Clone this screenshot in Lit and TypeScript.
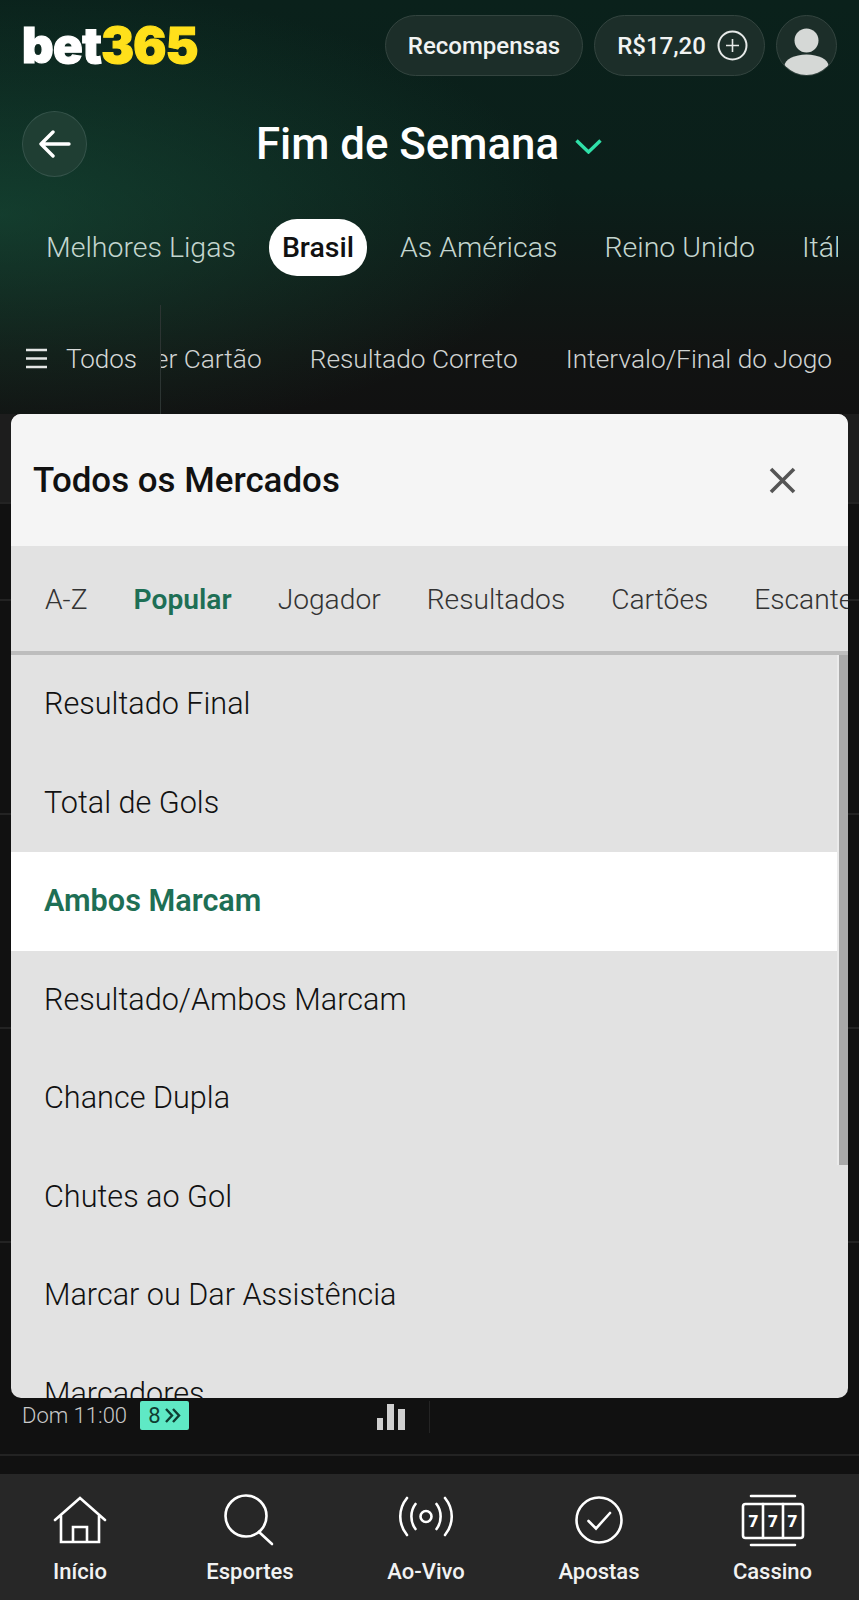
import { LitElement, html, css, svg } from "lit";
import { customElement } from "lit/decorators.js";

const regions = ["Melhores Ligas", "Brasil", "As Américas", "Reino Unido", "Itália"];
const marketTabs = ["Receber Cartão", "Resultado Correto", "Intervalo/Final do Jogo"];
const modalTabs = ["A-Z", "Popular", "Jogador", "Resultados", "Cartões", "Escanteios"];
const markets = ["Resultado Final", "Total de Gols", "Ambos Marcam", "Resultado/Ambos Marcam", "Chance Dupla", "Chutes ao Gol", "Marcar ou Dar Assistência", "Marcadores"];

const navIcons: Record<string, unknown> = {
  home: svg`<path d="M15 28 L40 6 L65 28 M21 24 V50 H59 V24 M33 50 V35 H47 V50"/>`,
  search: svg`<circle cx="36" cy="24" r="20.5"/><path d="M49 40 L62 52"/>`,
  live: svg`<circle cx="40" cy="24.5" r="5.5"/><path d="M29.5 12 C24 19 24 30 29.5 37 M50.5 12 C56 19 56 30 50.5 37 M21 6 C12 17 12 32 21 43 M59 6 C68 17 68 32 59 43"/>`,
  bets: svg`<circle cx="40" cy="28" r="22.5"/><path d="M29.5 29 L37 36.5 L51 21"/>`,
  casino: svg`<path d="M18 4 H62 M18 53 H62"/><rect x="10" y="12" width="60" height="34" rx="2.5"/><path d="M30 12 V46 M50 12 V46"/>
    <text x="20.5" y="35" class="seven">7</text><text x="40" y="35" class="seven">7</text><text x="59.5" y="35" class="seven">7</text>`,
};

const nav = [
  { label: "Início", icon: "home" },
  { label: "Esportes", icon: "search" },
  { label: "Ao-Vivo", icon: "live" },
  { label: "Apostas", icon: "bets" },
  { label: "Cassino", icon: "casino" },
];

@customElement("app-root")
export class AppRoot extends LitElement {
  static styles = css`
    :host {
      display: block;
      position: relative;
      width: 859px;
      height: 1600px;
      overflow: hidden;
      background: #111111;
      font-family: Roboto, "Liberation Sans", sans-serif;
      color: #fff;
    }
    .page { display: flex; flex-direction: column; height: 1600px; }

    .hero {
      height: 414px;
      box-sizing: border-box;
      flex-shrink: 0;
      background:
        radial-gradient(ellipse 560px 230px at 0px 215px, rgba(27, 92, 66, 0.5), rgba(27, 92, 66, 0) 100%),
        linear-gradient(180deg, #0a211b 0%, #0b1f1a 45%, #111312 85%, #111111 100%);
    }
    .topbar { display: flex; align-items: center; gap: 11px; padding: 15px 22px 0; height: 61px; }
    .logo {
      margin-right: auto;
      font-family: Inter, Roboto, sans-serif;
      font-weight: 900;
      font-size: 49px;
      letter-spacing: -0.6px;
      line-height: 61px;
      -webkit-text-stroke: 1.2px currentColor;
      color: #fff;
    }
    .logo span { color: #ffe01b; }
    .pill {
      box-sizing: border-box;
      height: 61px;
      border-radius: 31px;
      display: flex;
      align-items: center;
      justify-content: center;
      background: #1c2e29;
      border: 1px solid #33443f;
      font-size: 24px;
      font-weight: 500;
      color: #f1f3f2;
    }
    .pill.rewards { width: 198px; }
    .pill.balance { width: 171px; gap: 11px; padding-left: 6px; }
    .plus { width: 31px; height: 31px; }
    .avatar { width: 61px; height: 61px; border-radius: 50%; background: #1c2e29; border: 1px solid #33443f; box-sizing: border-box; overflow: hidden; }
    .avatar svg { display: block; }

    .title-row { display: flex; align-items: center; padding: 35px 22px 0; height: 66px; }
    .back {
      box-sizing: border-box;
      width: 65px; height: 66px;
      border-radius: 50%;
      background: #1f3e33;
      border: 1px solid #35534a;
      display: flex; align-items: center; justify-content: center;
    }
    .title { margin-left: 169px; font-size: 43.8px; font-weight: 500; color: #fff; line-height: 66px; }
    .chev { margin-left: 16px; margin-top: 5px; }

    .regions { display: flex; gap: 19px; padding-left: 32px; margin-top: 42px; height: 57px; width: 806px; overflow: hidden; align-items: center; }
    .region { flex-shrink: 0; padding: 0 14px; height: 57px; line-height: 57px; font-size: 28.5px; font-weight: 300; color: #c4d6cf; border-radius: 28px; box-sizing: border-box; }
    .region.on { background: #fff; color: #111; font-weight: 500; padding: 0 13px; }

    .markets { display: flex; height: 109px; margin-top: 29px; }
    .all { box-sizing: border-box; width: 161px; border-right: 1px solid #2c3432; display: flex; align-items: center; padding: 0 0 2px 26px; gap: 19px; font-size: 26px; font-weight: 300; color: #d7dad9; flex-shrink: 0; }
    .burger { width: 21px; height: 21px; }
    .scroller { flex: 1; min-width: 0; display: flex; justify-content: flex-end; align-items: center; gap: 48px; overflow: hidden; padding: 0 27px 2px 0; font-size: 26.3px; font-weight: 300; color: #d0d3d2; }
    .scroller span { flex-shrink: 0; }

    .band { height: 88px; flex-shrink: 0; background: #1d1d1d; }
    .row { box-sizing: border-box; flex-shrink: 0; border-top: 2px solid #232323; }
    .row.a { height: 97px; }
    .row.b { height: 214px; }
    .row.last { height: 213px; display: flex; align-items: flex-end; padding: 0 0 21px 22px; font-size: 22px; font-weight: 300; color: #c9c9c9; }
    .time { width: 118px; line-height: 30px; margin-bottom: 2px; }
    .badge { box-sizing: border-box; width: 49px; height: 29px; background: #5fe9c5; color: #0f3d31; border-radius: 2px; display: flex; align-items: center; justify-content: center; gap: 3px; font-size: 22px; font-weight: 400; margin-bottom: 3px; }
    .stats { margin-left: 188px; margin-bottom: 3px; }
    .vline { width: 1px; height: 32px; background: #242424; margin-left: 24px; }
    .tail { flex: 1; border-top: 2px solid #232323; }

    nav {
      flex-shrink: 0;
      height: 126px;
      background: #272727;
      display: grid;
      grid-template-columns: 160px 180px 172px 174px 173px;
      padding-top: 18px;
      box-sizing: border-box;
    }
    .item { display: flex; flex-direction: column; align-items: center; }
    .item svg { width: 80px; height: 56px; fill: none; stroke: #fff; stroke-width: 2.6; stroke-linecap: round; stroke-linejoin: miter; }
    .item .seven { fill: #fff; stroke: none; font: 900 17px Roboto, sans-serif; text-anchor: middle; }
    .item span { margin-top: 11px; font-size: 22px; font-weight: 500; line-height: 25px; color: #f2f2f2; }

    .modal {
      position: absolute;
      left: 11px; top: 414px;
      width: 837px; height: 984px;
      border-radius: 10px;
      overflow: hidden;
      background: #e2e2e2;
      display: flex;
      flex-direction: column;
    }
    .m-head { flex-shrink: 0; height: 132px; background: #f5f5f5; display: flex; align-items: center; justify-content: space-between; padding: 0 52px 0 22px; box-sizing: border-box; }
    .m-head h2 { margin: 0; font-size: 34.9px; font-weight: 500; color: #111; }
    .m-tabs { flex-shrink: 0; box-sizing: border-box; height: 109px; display: flex; gap: 46px; padding-left: 34px; border-bottom: 4px solid #bdbdbd; overflow: hidden; align-items: stretch; }
    .m-tab { flex-shrink: 0; font-size: 28.2px; font-weight: 300; color: #333; line-height: 108px; position: relative; height: 109px; }
    .m-tab.on { color: #1e6f55; font-weight: 600; }
    .m-tab.on::after { content: ""; position: absolute; left: 0; right: 0; bottom: 0; height: 4px; background: #1e6f55; }
    .list { position: relative; flex: 1; min-height: 0; overflow: hidden; padding-right: 9px; }
    .m-row { box-sizing: border-box; height: 98.5px; line-height: 97px; padding-left: 33px; font-size: 30.6px; font-weight: 300; color: #111; }
    .m-row.on { background: #fff; color: #1e6f55; font-weight: 600; }
    .thumb { position: absolute; right: 0; top: 0; width: 9px; height: 510px; background: #a9a9a9; box-shadow: -2px 0 0 #ebebeb; }
  `;

  render() {
    return html`
      <div class="page">
        <section class="hero">
          <div class="topbar">
            <div class="logo">bet<span>365</span></div>
            <div class="pill rewards">Recompensas</div>
            <div class="pill balance">R$17,20
              <svg class="plus" viewBox="0 0 31 31" fill="none" stroke="#e6e9e8" stroke-width="2"><circle cx="15.5" cy="15.5" r="14"/><path d="M15.5 9 V22 M9 15.5 H22" stroke-width="1.6"/></svg>
            </div>
            <div class="avatar">
              <svg width="59" height="59" viewBox="0 0 59 59" fill="#d5d8d6"><ellipse cx="29.5" cy="24.5" rx="12" ry="12"/><ellipse cx="29.5" cy="50" rx="22" ry="11.5"/></svg>
            </div>
          </div>
          <div class="title-row">
            <div class="back">
              <svg width="32" height="28" viewBox="0 0 32 28" fill="none" stroke="#fff" stroke-width="3.4" stroke-linecap="round" stroke-linejoin="round"><path d="M2 14 H30 M14 2 L2 14 L14 26"/></svg>
            </div>
            <div class="title">Fim de Semana</div>
            <svg class="chev" width="27" height="15" viewBox="0 0 27 15" fill="none" stroke="#2fe0a8" stroke-width="3.4"><path d="M1.5 1.5 L13.5 13 L25.5 1.5"/></svg>
          </div>
          <div class="regions">
            ${regions.map((r) => html`<div class="region ${r === "Brasil" ? "on" : ""}">${r}</div>`)}
          </div>
          <div class="markets">
            <div class="all">
              <svg class="burger" viewBox="0 0 21 21" stroke="#e4e6e5" stroke-width="2.4"><path d="M0 2 H21 M0 10.5 H21 M0 19 H21"/></svg>
              Todos
            </div>
            <div class="scroller">${marketTabs.map((t) => html`<span>${t}</span>`)}</div>
          </div>
        </section>
        <div class="band"></div>
        <div class="row a"></div>
        <div class="row b"></div>
        <div class="row b"></div>
        <div class="row b"></div>
        <div class="row last">
          <div class="time">Dom 11:00</div>
          <div class="badge">8
            <svg width="17" height="15" viewBox="0 0 17 15" fill="none" stroke="#0f3d31" stroke-width="2.4"><path d="M2 1 L8 7.5 L2 14 M9 1 L15 7.5 L9 14"/></svg>
          </div>
          <svg class="stats" width="28" height="26" viewBox="0 0 28 26" fill="#cfcfcf"><rect x="0" y="14" width="6" height="12"/><rect x="10" y="0" width="7" height="26"/><rect x="21" y="5" width="7" height="21"/></svg>
          <div class="vline"></div>
        </div>
        <div class="tail"></div>
        <nav>
          ${nav.map((n) => html`<div class="item"><svg viewBox="0 0 80 56">${navIcons[n.icon]}</svg><span>${n.label}</span></div>`)}
        </nav>
      </div>
      <div class="modal">
        <div class="m-head">
          <h2>Todos os Mercados</h2>
          <svg width="27" height="27" viewBox="0 0 27 27" stroke="#555" stroke-width="3.6"><path d="M2 2 L25 25 M25 2 L2 25"/></svg>
        </div>
        <div class="m-tabs">
          ${modalTabs.map((t) => html`<div class="m-tab ${t === "Popular" ? "on" : ""}">${t}</div>`)}
        </div>
        <div class="list">
          ${markets.map((m) => html`<div class="m-row ${m === "Ambos Marcam" ? "on" : ""}">${m}</div>`)}
          <div class="thumb"></div>
        </div>
      </div>
    `;
  }
}
